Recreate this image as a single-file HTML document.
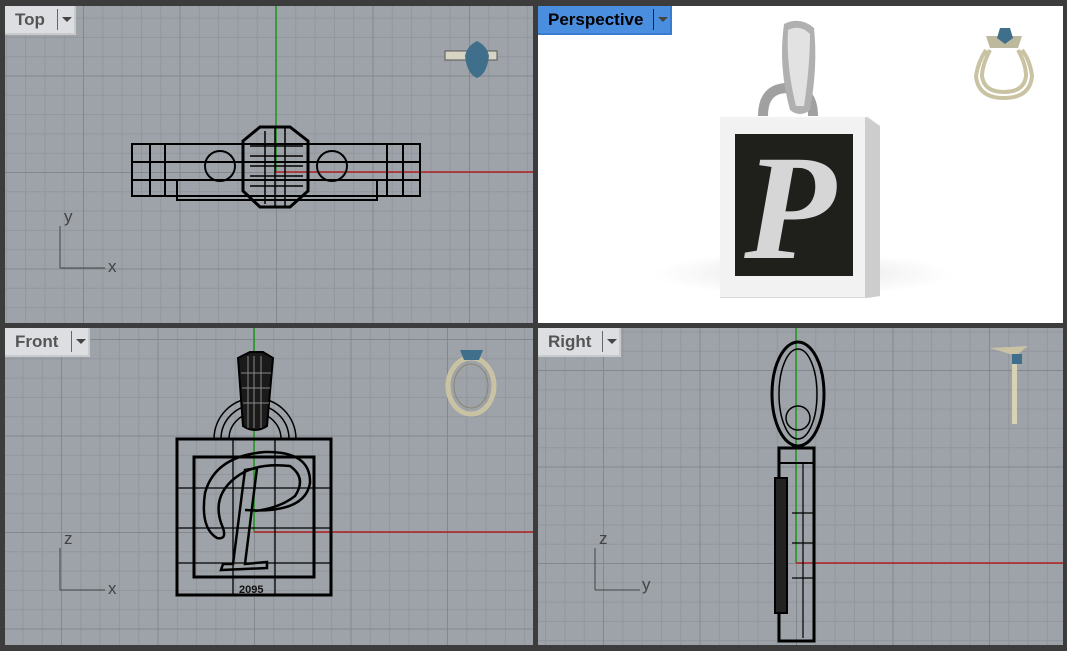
<!DOCTYPE html>
<html><head><meta charset="utf-8"><style>
html,body{margin:0;padding:0;background:#3c3c3c;width:1067px;height:651px;overflow:hidden;font-family:"Liberation Sans",sans-serif}
.vp{position:absolute;overflow:hidden;background-color:#9ea3a9;
background-image:
linear-gradient(to right,#83888e 1px,transparent 1px),
linear-gradient(to bottom,#83888e 1px,transparent 1px),
linear-gradient(to right,#92979d 1px,transparent 1px),
linear-gradient(to bottom,#92979d 1px,transparent 1px);
background-size:96.5px 96.5px,96.5px 96.5px,19.3px 19.3px,19.3px 19.3px;}
.lab{position:absolute;left:0;top:0;height:27px;background:#dcdee2;font-weight:bold;font-size:17px;color:#555;line-height:28px;padding-left:10px;border-right:2px solid #c8cacc;border-bottom:2px solid #c8cacc}
.lab .dd{position:absolute;right:0;top:3px;width:16px;height:21px;border-left:1px solid #666}
.lab .dd:after{content:"";position:absolute;left:4px;top:8px;border-left:5px solid transparent;border-right:5px solid transparent;border-top:5px solid #444}
svg{position:absolute;left:0;top:0}
</style></head><body>

<div class="vp" style="left:5px;top:6px;width:528px;height:317px;background-position:271px 166px,271px 166px,271px 166px,271px 166px">
<svg width="528" height="317" fill="none" stroke="#000" stroke-width="2">
<line x1="271" y1="0" x2="271" y2="166" stroke="#1c9a1c" stroke-width="1.5"/>
<line x1="271" y1="166" x2="528" y2="166" stroke="#b02020" stroke-width="1.5"/>
<rect x="127" y="138" width="288" height="52"/>
<rect x="160" y="138" width="222" height="52"/>
<line x1="127" y1="156" x2="415" y2="156"/><line x1="127" y1="174" x2="415" y2="174"/>
<line x1="145" y1="138" x2="145" y2="190"/><line x1="398" y1="138" x2="398" y2="190"/>
<rect x="172" y="174" width="200" height="20"/>
<circle cx="215" cy="160" r="15"/><circle cx="327" cy="160" r="15"/>
<polygon points="238,135 255,121 285,121 303,135 303,185 285,201 255,201 238,185" stroke-width="3"/>
<g stroke-width="1.5"><line x1="245" y1="140" x2="298" y2="140"/><line x1="245" y1="150" x2="298" y2="150"/><line x1="245" y1="160" x2="298" y2="160"/><line x1="245" y1="170" x2="298" y2="170"/><line x1="245" y1="180" x2="298" y2="180"/><line x1="260" y1="125" x2="260" y2="198"/><line x1="270" y1="122" x2="270" y2="200"/><line x1="280" y1="122" x2="280" y2="200"/></g>
<g stroke="#444" stroke-width="1"><line x1="55" y1="262" x2="55" y2="220"/><line x1="55" y1="262" x2="100" y2="262"/></g>
<text x="59" y="216" fill="#444" stroke="none" font-size="17">y</text><text x="103" y="266" fill="#444" stroke="none" font-size="17">x</text>
<rect x="440" y="45" width="52" height="9" fill="#d8d4c4" stroke="#555" stroke-width="1"/>
<path d="M472 35 Q482 40 484 50 Q482 68 472 72 Q462 68 460 50 Q462 40 472 35Z" fill="#3f6f8a" stroke="none"/>
</svg>
<div class="lab" style="width:59px">Top<span class="dd"></span></div>
</div>

<div class="vp" style="left:538px;top:6px;width:525px;height:317px;background:#fff">
<svg width="525" height="317">
<defs><radialGradient id="sh"><stop offset="0" stop-color="#e6e6e6"/><stop offset="1" stop-color="#fff"/></radialGradient></defs>
<ellipse cx="265" cy="268" rx="150" ry="22" fill="url(#sh)"/>
<path d="M225 110 Q225 82 250 82 Q275 82 275 110" fill="none" stroke="#a0a0a0" stroke-width="10"/>
<path d="M246 18 Q262 10 276 22 Q280 60 272 104 Q262 112 252 104 Q240 60 246 18 Z" fill="#b0b0b0"/>
<path d="M250 24 Q262 18 272 28 Q272 60 266 100 L258 100 Q248 60 250 24 Z" fill="#e2e2e2"/>
<polygon points="182,111 330,111 342,120 342,290 330,292 182,292" fill="#d9d9d9"/>
<rect x="182" y="111" width="145" height="180" fill="#f2f2f2"/>
<polygon points="327,111 342,120 342,290 327,292" fill="#cdcdcd"/>
<rect x="197" y="128" width="118" height="142" fill="#1f1f1b"/>
<text x="252" y="252" text-anchor="middle" font-family="Liberation Serif,serif" font-style="italic" font-weight="bold" font-size="150" fill="#d6d6d6">P</text>
<path d="M448 44 Q440 56 438 70 Q440 92 466 92 Q492 92 494 70 Q492 54 484 44 M452 44 Q444 60 444 70 Q446 86 466 86 Q486 86 488 70 Q488 58 480 44" fill="none" stroke="#c9c3a4" stroke-width="4"/>
<path d="M448 30 L484 30 L480 42 L452 42Z" fill="#bdb99f"/><path d="M462 22 l10 0 l3 10 l-8 6 l-8-6z" fill="#3f6f8a"/>
</svg>
<div class="lab" style="width:122px;background:#4a8ee0;color:#000;border-color:#3a7ad0">Perspective<span class="dd" style="border-color:#222"></span></div>
</div>

<div class="vp" style="left:5px;top:328px;width:528px;height:317px;background-position:249px 204px,249px 204px,249px 204px,249px 204px">
<svg width="528" height="317" fill="none" stroke="#000" stroke-width="2">
<line x1="249" y1="0" x2="249" y2="204" stroke="#1c9a1c" stroke-width="1.5"/>
<line x1="249" y1="204" x2="528" y2="204" stroke="#b02020" stroke-width="1.5"/>
<path d="M209 111 A41 41 0 0 1 291 111" stroke-width="1.5"/><path d="M216 111 A34 34 0 0 1 284 111" stroke-width="1.5"/><path d="M224 111 A26 26 0 0 1 276 111" stroke-width="1.5"/>
<path d="M233 30 L245 24 L258 24 L268 30 L262 98 Q250 106 238 98 Z" fill="#1a1a1a"/>
<g stroke="#888" stroke-width="1"><line x1="236" y1="45" x2="266" y2="45"/><line x1="237" y1="60" x2="265" y2="60"/><line x1="238" y1="75" x2="264" y2="75"/><line x1="249" y1="28" x2="249" y2="100"/><line x1="243" y1="28" x2="243" y2="100"/><line x1="256" y1="28" x2="256" y2="100"/></g>
<rect x="172" y="111" width="154" height="156" stroke-width="3"/>
<rect x="189" y="129" width="120" height="120" stroke-width="3"/>
<g stroke-width="1.3"><line x1="172" y1="160" x2="326" y2="160"/><line x1="172" y1="200" x2="326" y2="200"/><line x1="172" y1="235" x2="326" y2="235"/><line x1="228" y1="111" x2="228" y2="267"/><line x1="270" y1="111" x2="270" y2="267"/></g>
<path d="M240 182 Q300 186 305 155 Q306 123 260 124 Q210 128 200 165 Q195 200 212 210 Q222 212 218 200 Q205 170 230 150 Q250 134 285 138 Q302 150 290 168 Q275 180 250 183" stroke-width="2.5"/>
<path d="M240 142 L252 140 L240 236 L262 234 L262 240 L216 242 L218 236 L228 236 Z" stroke-width="2.5"/>
<text x="234" y="265" font-size="11" font-weight="bold" fill="#111" stroke="none">2095</text>
<g stroke="#444" stroke-width="1"><line x1="55" y1="262" x2="55" y2="220"/><line x1="55" y1="262" x2="100" y2="262"/></g>
<text x="59" y="216" fill="#444" stroke="none" font-size="17">z</text><text x="103" y="266" fill="#444" stroke="none" font-size="17">x</text>
<ellipse cx="466" cy="58" rx="23" ry="28" stroke="#c9c3a4" stroke-width="5"/>
<ellipse cx="466" cy="58" rx="17" ry="22" stroke="#8a866f" stroke-width="1"/>
<path d="M455 22 L478 22 L474 32 L459 32Z" fill="#3f6f8a" stroke="none"/>
</svg>
<div class="lab" style="width:73px">Front<span class="dd"></span></div>
</div>

<div class="vp" style="left:538px;top:328px;width:525px;height:317px;background-position:258px 235px,258px 235px,258px 235px,258px 235px">
<svg width="525" height="317" fill="none" stroke="#000" stroke-width="2">
<line x1="258" y1="0" x2="258" y2="235" stroke="#1c9a1c" stroke-width="1.5"/>
<line x1="258" y1="235" x2="525" y2="235" stroke="#b02020" stroke-width="1.5"/>
<ellipse cx="260" cy="66" rx="26" ry="52" stroke-width="3"/><ellipse cx="260" cy="66" rx="19" ry="45" stroke-width="1.5"/>
<circle cx="260" cy="90" r="12" stroke-width="1.5"/>
<rect x="241" y="120" width="35" height="193" stroke-width="3"/>
<rect x="241" y="120" width="35" height="15" stroke-width="2"/>
<rect x="237" y="150" width="12" height="135" fill="#222"/>
<g stroke-width="1.2"><line x1="265" y1="135" x2="265" y2="310"/><line x1="254" y1="185" x2="276" y2="185"/><line x1="254" y1="215" x2="276" y2="215"/><line x1="254" y1="250" x2="276" y2="250"/></g>
<g stroke="#444" stroke-width="1"><line x1="57" y1="262" x2="57" y2="220"/><line x1="57" y1="262" x2="102" y2="262"/></g>
<text x="61" y="216" fill="#444" stroke="none" font-size="17">z</text><text x="104" y="262" fill="#444" stroke="none" font-size="17">y</text>
<path d="M452 20 L490 18 L480 26 L472 26Z" fill="#c9c3a4" stroke="none"/><path d="M474 36 L479 36 L479 96 L474 96Z" fill="#d8d2b4" stroke="none"/><rect x="474" y="26" width="10" height="10" fill="#3f6f8a" stroke="none"/>
</svg>
<div class="lab" style="width:71px">Right<span class="dd"></span></div>
</div>
</body></html>
